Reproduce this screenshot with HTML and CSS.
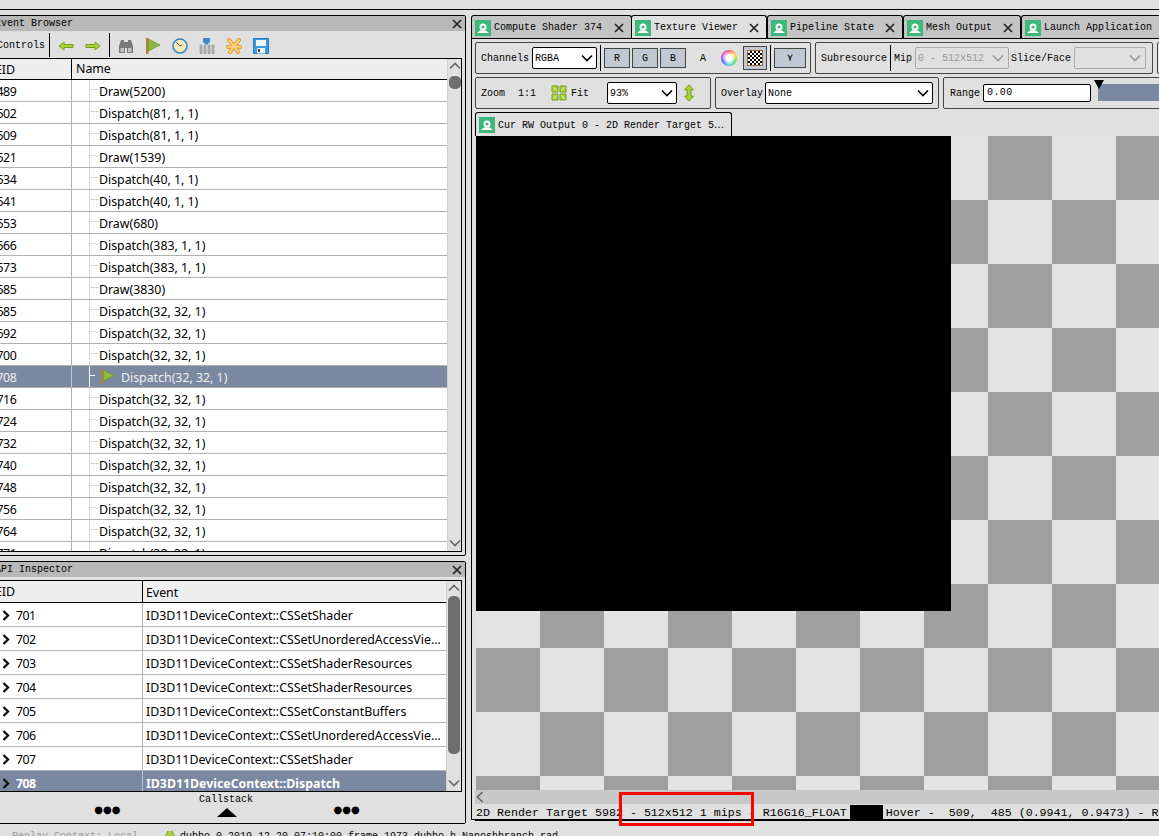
FILE: index.html
```html
<!DOCTYPE html>
<html lang="en">
<head>
<meta charset="utf-8">
<title>RenderDoc</title>
<link rel="stylesheet" href="styles.css">
</head>
<body>
<svg class="defs" width="0" height="0">
  <symbol id="tabicon" viewBox="0 0 16 16"><rect width="16" height="16" fill="#3cb878"/><path d="M4.5 7a3.5 3.5 0 1 1 7 0a3.5 3.5 0 1 1-7 0zM6.5 7a1.5 1.5 0 1 0 3 0a1.5 1.5 0 1 0-3 0z" fill="#fff"/><path d="M2 13l3-2.5h6l3 2.5z" fill="#fff"/></symbol>
  <symbol id="flag" viewBox="0 0 16 16"><rect x="1" y="0" width="2.500" height="16" fill="#b08040"/><path d="M3.500 1l11.500 6l-11.500 6z" fill="#8cb83c" stroke="#6c9428" stroke-width=".7"/></symbol>
  <symbol id="chev" viewBox="0 0 12 8"><path d="M1 1.5l5 5l5-5" fill="none" stroke="currentColor" stroke-width="1.6"/></symbol>
  <symbol id="close" viewBox="0 0 10 10"><path d="M1 1l8 8M9 1l-8 8" fill="none" stroke="#222" stroke-width="1.700"/></symbol>
  <symbol id="gt" viewBox="0 0 8 11"><path d="M1.500 1l4.500 4.500l-4.500 4.500" fill="none" stroke="#111" stroke-width="2.300"/></symbol>
</svg>
<div class="app">
  <div class="topbar"></div>
  <div class="main">
    <div class="leftcol">
      <section class="panel events">
        <div class="title"><span>Event Browser</span><svg class="x"><use href="#close"/></svg></div>
        <div class="tools">
          <span class="ctl">Controls</span>
          <i class="vsep"></i>
          <svg class="ic arrow" viewBox="0 0 16 10"><path d="M1 5l5-4v2.500h9v3h-9v2.500z" fill="#a8d038" stroke="#7c9c20"/></svg>
          <svg class="ic arrow gap" viewBox="0 0 16 10"><path d="M15 5l-5-4v2.500h-9v3h9v2.500z" fill="#a8d038" stroke="#7c9c20"/></svg>
          <i class="vsep wide"></i>
          <svg class="ic" viewBox="0 0 16 16"><path d="M1 8l2-6h3v2h4v-2h3l2 6v7h-6v-5h-2v5h-6z" fill="#77797b"/><rect x="2.500" y="10" width="3.500" height="4" fill="#c2c4c6"/><rect x="10" y="10" width="3.500" height="4" fill="#c2c4c6"/></svg>
          <svg class="ic"><use href="#flag"/></svg>
          <svg class="ic" viewBox="0 0 16 16"><circle cx="8" cy="8" r="7" fill="#f6e8b8" stroke="#2a88c8" stroke-width="1.500"/><path d="M4.500 4.500l3.500 3.500l2-1" fill="none" stroke="#555"/></svg>
          <svg class="ic" viewBox="0 0 16 16"><path d="M1 7h2v9h-2zM5 7h2v9h-2zM9 7h2v9h-2zM13 7h2v9h-2z" fill="#b0b4b8" stroke="#888" stroke-width=".5"/><path d="M4 0h7v4l-3.500 3l-3.500-3z" fill="#3a88d0"/></svg>
          <svg class="ic" viewBox="0 0 16 16"><path d="M8 8l-5-6M8 8l5-6M8 8l-6 1M8 8l6 1M8 8l-4 6M8 8l4 6" stroke="#e89830" stroke-width="4" stroke-linecap="round"/><path d="M8 8l-5-6M8 8l5-6M8 8l-6 1M8 8l6 1M8 8l-4 6M8 8l4 6" stroke="#fcd080" stroke-width="2" stroke-linecap="round"/></svg>
          <svg class="ic" viewBox="0 0 16 16"><path d="M.5.500h15v15h-15z" fill="#3a9ce0" stroke="#2a78b8"/><rect x="3" y="2" width="10" height="6" fill="#eef4fa"/><rect x="4" y="10" width="8" height="5.500" fill="#eef4fa"/><rect x="5" y="11" width="2" height="3" fill="#445"/></svg>
        </div>
        <div class="frame">
          <div class="list">
            <div class="head tree-cols"><span class="c1">EID</span><span class="c2">Name</span></div>
            <div class="row tree-cols"><span class="c1">1489</span><span class="c2"><i class="branch"></i>Draw(5200)</span></div>
            <div class="row tree-cols"><span class="c1">1502</span><span class="c2"><i class="branch"></i>Dispatch(81, 1, 1)</span></div>
            <div class="row tree-cols"><span class="c1">1509</span><span class="c2"><i class="branch"></i>Dispatch(81, 1, 1)</span></div>
            <div class="row tree-cols"><span class="c1">1521</span><span class="c2"><i class="branch"></i>Draw(1539)</span></div>
            <div class="row tree-cols"><span class="c1">1534</span><span class="c2"><i class="branch"></i>Dispatch(40, 1, 1)</span></div>
            <div class="row tree-cols"><span class="c1">1541</span><span class="c2"><i class="branch"></i>Dispatch(40, 1, 1)</span></div>
            <div class="row tree-cols"><span class="c1">1553</span><span class="c2"><i class="branch"></i>Draw(680)</span></div>
            <div class="row tree-cols"><span class="c1">1566</span><span class="c2"><i class="branch"></i>Dispatch(383, 1, 1)</span></div>
            <div class="row tree-cols"><span class="c1">1573</span><span class="c2"><i class="branch"></i>Dispatch(383, 1, 1)</span></div>
            <div class="row tree-cols"><span class="c1">1585</span><span class="c2"><i class="branch"></i>Draw(3830)</span></div>
            <div class="row tree-cols"><span class="c1">1685</span><span class="c2"><i class="branch"></i>Dispatch(32, 32, 1)</span></div>
            <div class="row tree-cols"><span class="c1">1692</span><span class="c2"><i class="branch"></i>Dispatch(32, 32, 1)</span></div>
            <div class="row tree-cols"><span class="c1">1700</span><span class="c2"><i class="branch"></i>Dispatch(32, 32, 1)</span></div>
            <div class="row tree-cols sel"><span class="c1">1708</span><span class="c2"><i class="branch"></i><svg class="rowflag"><use href="#flag"/></svg>Dispatch(32, 32, 1)</span></div>
            <div class="row tree-cols"><span class="c1">1716</span><span class="c2"><i class="branch"></i>Dispatch(32, 32, 1)</span></div>
            <div class="row tree-cols"><span class="c1">1724</span><span class="c2"><i class="branch"></i>Dispatch(32, 32, 1)</span></div>
            <div class="row tree-cols"><span class="c1">1732</span><span class="c2"><i class="branch"></i>Dispatch(32, 32, 1)</span></div>
            <div class="row tree-cols"><span class="c1">1740</span><span class="c2"><i class="branch"></i>Dispatch(32, 32, 1)</span></div>
            <div class="row tree-cols"><span class="c1">1748</span><span class="c2"><i class="branch"></i>Dispatch(32, 32, 1)</span></div>
            <div class="row tree-cols"><span class="c1">1756</span><span class="c2"><i class="branch"></i>Dispatch(32, 32, 1)</span></div>
            <div class="row tree-cols"><span class="c1">1764</span><span class="c2"><i class="branch"></i>Dispatch(32, 32, 1)</span></div>
            <div class="row tree-cols"><span class="c1">1771</span><span class="c2"><i class="branch"></i>Dispatch(32, 32, 1)</span></div>
          </div>
          <div class="vscroll">
            <svg class="sarrow"><use href="#chev" transform="scale(1 -1) translate(0 -8)"/></svg>
            <div class="thumb thumb-small"></div>
            <svg class="sarrow bottom"><use href="#chev"/></svg>
          </div>
        </div>
      </section>
      <section class="panel api">
        <div class="title"><span>API Inspector</span><svg class="x"><use href="#close"/></svg></div>
        <div class="frame apiframe">
          <div class="list">
            <div class="head api-cols"><span class="c1">EID</span><span class="c2">Event</span></div>
            <div class="row api-cols"><span class="c1"><svg class="gt"><use href="#gt"/></svg>701</span><span class="c2">ID3D11DeviceContext::CSSetShader</span></div>
            <div class="row api-cols"><span class="c1"><svg class="gt"><use href="#gt"/></svg>702</span><span class="c2">ID3D11DeviceContext::CSSetUnorderedAccessVie…</span></div>
            <div class="row api-cols"><span class="c1"><svg class="gt"><use href="#gt"/></svg>703</span><span class="c2">ID3D11DeviceContext::CSSetShaderResources</span></div>
            <div class="row api-cols"><span class="c1"><svg class="gt"><use href="#gt"/></svg>704</span><span class="c2">ID3D11DeviceContext::CSSetShaderResources</span></div>
            <div class="row api-cols"><span class="c1"><svg class="gt"><use href="#gt"/></svg>705</span><span class="c2">ID3D11DeviceContext::CSSetConstantBuffers</span></div>
            <div class="row api-cols"><span class="c1"><svg class="gt"><use href="#gt"/></svg>706</span><span class="c2">ID3D11DeviceContext::CSSetUnorderedAccessVie…</span></div>
            <div class="row api-cols"><span class="c1"><svg class="gt"><use href="#gt"/></svg>707</span><span class="c2">ID3D11DeviceContext::CSSetShader</span></div>
            <div class="row api-cols sel bold"><span class="c1"><svg class="gt"><use href="#gt"/></svg>708</span><span class="c2">ID3D11DeviceContext::Dispatch</span></div>
          </div>
          <div class="vscroll api-scroll">
            <svg class="sarrow"><use href="#chev" transform="scale(1 -1) translate(0 -8)"/></svg>
            <div class="thumb thumb-big"></div>
            <svg class="sarrow bottom"><use href="#chev"/></svg>
          </div>
        </div>
        <div class="splitter">
          <span class="dots">●●●</span>
          <div class="callstack"><span>Callstack</span><i class="tri"></i></div>
          <span class="dots">●●●</span>
        </div>
      </section>
    </div>
    <div class="rightcol">
      <div class="tabs">
        <div class="tab t1"><svg class="tabic"><use href="#tabicon"/></svg><span>Compute Shader 374</span><svg class="x"><use href="#close"/></svg></div>
        <div class="tab t2 active"><svg class="tabic"><use href="#tabicon"/></svg><span>Texture Viewer</span><svg class="x"><use href="#close"/></svg></div>
        <div class="tab t3"><svg class="tabic"><use href="#tabicon"/></svg><span>Pipeline State</span><svg class="x"><use href="#close"/></svg></div>
        <div class="tab t4"><svg class="tabic"><use href="#tabicon"/></svg><span>Mesh Output</span><svg class="x"><use href="#close"/></svg></div>
        <div class="tab t5"><svg class="tabic"><use href="#tabicon"/></svg><span>Launch Application</span></div>
      </div>
      <div class="pane">
        <div class="bar">
          <div class="group g1">
            <span class="lbl">Channels</span>
            <div class="sel-box s-rgba"><span>RGBA</span><svg class="dd"><use href="#chev"/></svg></div>
            <i class="vsep tall"></i>
            <span class="btn">R</span><span class="btn">G</span><span class="btn">B</span>
            <span class="a">A</span>
            <div class="wheel"></div>
            <div class="chk-btn"><i class="chk"></i></div>
            <i class="vsep tall"></i>
            <span class="btn wide">⋎</span>
          </div>
          <div class="group g2">
            <span class="lbl sub">Subresource</span>
            <i class="vsep tall"></i>
            <span class="lbl mip">Mip</span>
            <div class="sel-box off s-mip"><span>0 - 512x512</span><svg class="dd"><use href="#chev"/></svg></div>
            <span class="lbl">Slice/Face</span>
            <div class="sel-box off s-slice"><span></span><svg class="dd"><use href="#chev"/></svg></div>
          </div>
          <div class="group g3"></div>
        </div>
        <div class="bar second">
          <div class="group z1">
            <span class="lbl">Zoom</span>
            <span class="lbl one">1:1</span>
            <svg class="fit" viewBox="0 0 16 16"><path d="M1 1h6v6h-6zM9 1h6v6h-6zM1 9h6v6h-6zM9 9h6v6h-6z" fill="#a8d038" stroke="#7c9c20"/><path d="M2.500 2.500l3 3M13.500 2.500l-3 3M2.500 13.500l3-3M13.500 13.500l-3-3" stroke="#eef6d0"/></svg>
            <span class="lbl">Fit</span>
            <div class="sel-box s-zoom"><span>93%</span><svg class="dd"><use href="#chev"/></svg></div>
            <svg class="updown" viewBox="0 0 12 18"><path d="M6 .8l4.500 5h-2.500v6.400h2.500l-4.500 5l-4.500-5h2.500v-6.400h-2.500z" fill="#a8d038" stroke="#7c9c20"/></svg>
          </div>
          <div class="group z2">
            <span class="lbl">Overlay</span>
            <div class="sel-box s-over"><span>None</span><svg class="dd"><use href="#chev"/></svg></div>
          </div>
          <div class="group z3">
            <span class="lbl">Range</span>
            <div class="input">0.00</div>
            <div class="slider"><i class="marker"></i></div>
          </div>
        </div>
        <div class="inner-tabs">
          <div class="tab itab"><svg class="tabic"><use href="#tabicon"/></svg><span>Cur RW Output 0 - 2D Render Target 5<span class="more">…</span></span></div>
        </div>
        <div class="viewer"><div class="texture"></div></div>
        <div class="hscroll"><svg class="larrow"><use href="#chev" transform="rotate(90 6 6) translate(0 2)"/></svg></div>
        <div class="status"><span>2D Render Target 5982 - 512x512 1 mips - R16G16_FLOAT</span><i class="swatch"></i><span>Hover -  509,  485 (0.9941, 0.9473) - R</span></div>
      </div>
      <div class="annot"></div>
    </div>
  </div>
  <div class="foot"><span class="replay">Replay Context: Local</span><svg class="footic" viewBox="0 0 12 12"><path d="M1 11l5-10l5 10z" fill="#a8d038" stroke="#7c9c20"/></svg><span class="cap">dubbo 0.2019.12.20 07:10:00 frame 1973 dubbo.h Nanoshbranch.rad</span></div>
</div>
</body>
</html>
```
FILE: styles.css
```css
* { box-sizing: border-box; }
html, body { margin: 0; padding: 0; background: #e0e0e0; }
.defs { position: absolute; }
.app { width: 1159px; height: 836px; overflow: hidden; display: flex; flex-direction: column; font-family: "Liberation Mono", monospace; font-size: 10px; color: #000; }
.topbar { height: 10px; flex: none; border-bottom: 1px solid #000; }
.main { display: flex; flex: none; height: 815px; padding-top: 5px; margin-left: -12px; gap: 5px; }
.leftcol { width: 478px; flex: none; display: flex; flex-direction: column; gap: 5px; }
.panel { border: 1px solid #000; border-radius: 2px; display: flex; flex-direction: column; }
.events { height: 541px; }
.api { height: 263px; }
.title { height: 15px; flex: none; background: #b8b8b8; display: flex; justify-content: space-between; align-items: center; padding: 0 3px 0 6px; line-height: 15px; }
.x { width: 10px; height: 10px; flex: none; }
.tools { height: 27px; flex: none; display: flex; align-items: center; padding: 2px 0 0 8px; font-size: 10px; }
.ctl { width: 52px; }
.vsep { width: 1px; height: 24px; background: #000; flex: none; }
.ic { width: 16px; height: 16px; flex: none; margin-left: 11px; }
.tools .vsep { margin-top: -2px; }
.tools .arrow { margin-left: 8px; height: 10px; }
.tools .arrow.gap { margin-left: 11px; }
.tools .vsep.wide { margin-left: 8px; margin-right: -3px; }
.frame { flex: 1; min-height: 0; margin-right: 3px; border: 1px solid #000; display: flex; overflow: hidden; background: #fff; margin-bottom: 3px; }
.apiframe { flex: none; height: 212px; margin-top: 3px; margin-bottom: 0; }
.list { flex: 1; min-width: 0; overflow: hidden; font-family: "Noto Sans", sans-serif; font-size: 12.35px; }
.head { height: 21px; background: #eeeeee; border-bottom: 1px solid #000; line-height: 22px; }
.head .c1, .head .c2 { border-right: 1px solid #000; }
.head .c2 { border-right: 0; padding-left: 4px; }
.row { height: 22px; line-height: 23px; border-bottom: 1px solid #b0b0b0; background: #fff; white-space: nowrap; }
.tree-cols { display: grid; grid-template-columns: 82px 1fr; }
.api-cols { display: grid; grid-template-columns: 153px 1fr; }
.api-cols.row { height: 24px; line-height: 25px; }
.head.api-cols { height: 22px; line-height: 21px; }
.c1 { padding-left: 0; border-right: 1px solid #b0b0b0; overflow: hidden; }
.row .c1 { letter-spacing: -.5px; }
.head.tree-cols .c1 { padding-left: 5px; }
.c2 { overflow: hidden; display: flex; align-items: center; }
.row.tree-cols .c2 { padding-top: 1px; }
.api-cols .c1 { padding-left: 12px; }
.head.api-cols .c1 { padding-left: 5px; }
.api-cols .c2 { padding-left: 3px; padding-top: 1px; }
.branch { width: 27px; height: 22px; flex: none; margin-top: -2px; background: linear-gradient(#d8d8d8, #d8d8d8) 17px 0 / 1px 100% no-repeat, linear-gradient(#d8d8d8, #d8d8d8) 17px 10px / 10px 1px no-repeat; }
.sel { background: #7a88a2; color: #f0f0f0; }
.sel .c1 { border-right-color: #c0c6d0; }
.sel .branch { background: linear-gradient(#fff, #fff) 17px 0 / 1px 100% no-repeat, linear-gradient(#fff, #fff) 17px 10px / 6px 1px no-repeat; }
.rowflag { width: 15px; height: 17px; margin: -1px 6px 0 1px; flex: none; }
.bold { font-weight: 700; color: #fff; }
.gt { width: 8px; height: 11px; margin-right: 6px; vertical-align: -1px; }
.vscroll { width: 14px; flex: none; background: #e0e0e0; border-left: 1px solid #d0d0d0; display: flex; flex-direction: column; align-items: center; color: #666; }
.api-scroll { width: 15px; }
.sarrow { width: 12px; height: 8px; margin-top: 3px; flex: none; }
.sarrow.bottom { margin-top: auto; margin-bottom: 4px; }
.thumb { width: 12px; background: #6e6e6e; border-radius: 5px; }
.thumb-small { height: 13px; margin-top: 6px; }
.thumb-big { height: 158px; margin-top: 4px; }
.splitter { flex: 1; display: flex; justify-content: center; align-items: flex-start; background: #e0e0e0; }
.dots { font-family: "DejaVu Sans", sans-serif; font-size: 10px; line-height: 12px; margin-top: 12px; }
.callstack { width: 179px; display: flex; flex-direction: column; align-items: center; line-height: 12px; margin: 2px 17px 0; }
.callstack span { margin: 0 2px 0 0; }
.tri { width: 0; height: 0; border-left: 10px solid transparent; border-right: 10px solid transparent; border-bottom: 9px solid #000; margin-top: 2px; }
.rightcol { width: 700px; flex: none; position: relative; display: flex; flex-direction: column; }
.tabs { height: 24px; flex: none; display: flex; align-items: stretch; }
.tab { background: #c4c4c4; border: 1px solid #000; border-bottom: 0; border-radius: 3px 3px 0 0; display: flex; align-items: center; padding-left: 3px; gap: 3px; white-space: nowrap; flex: none; }
.tab.active { background: #e0e0e0; }
.tab .x { margin-left: auto; margin-right: 7px; }
.tabic { width: 16px; height: 16px; flex: none; }
.t1 { width: 161px; }
.t2 { width: 136px; margin-left: -1px; }
.t3 { width: 136px; }
.t4 { width: 118px; }
.t5 { width: 160px; }
.pane { height: 782px; border: 1px solid #000; padding: 3px 3px 0 3px; margin-top: -1px; display: flex; flex-direction: column; }
.bar { display: flex; gap: 4px; height: 32px; flex: none; }
.bar.second { margin-top: 3px; }
.group { border: 1px solid #444; border-radius: 2px; display: flex; align-items: center; padding-left: 5px; flex: none; }
.g1 { width: 336px; }
.g2 { width: 338px; }
.g3 { width: 20px; }
.z1 { width: 236px; }
.z2 { width: 224px; }
.z3 { width: 240px; padding-left: 6px; }
.lbl { flex: none; }
.sel-box { height: 22px; background: #fff; border: 1px solid #000; border-radius: 2px; display: flex; align-items: center; justify-content: space-between; padding: 0 3px 0 2px; flex: none; }
.sel-box .dd { width: 12px; height: 8px; flex: none; color: #000; }
.sel-box.off { background: #e0e0e0; border-color: #aaa; color: #999; }
.sel-box.off .dd { color: #999; }
.s-rgba { width: 65px; margin-left: 3px; }
.tall { height: 26px; margin: 0 3px; }
.btn { width: 26px; height: 20px; background: #c0c8d4; border: 1px solid #444; display: flex; align-items: center; justify-content: center; margin-right: 2px; flex: none; }
.btn.wide { width: 32px; margin: 0; }
.a { width: 30px; text-align: center; flex: none; }
.wheel { width: 16px; height: 16px; border-radius: 50%; background: radial-gradient(circle, #fff 0 25%, transparent 70%), conic-gradient(#f44, #fc4, #4d4, #4cc, #44f, #d4d, #f44); flex: none; margin-left: 3px; }
.chk-btn { width: 24px; height: 24px; background: #c0c8d4; border: 1px solid #444; margin-left: 6px; display: flex; align-items: center; justify-content: center; flex: none; }
.chk { width: 14px; height: 14px; outline: 1px solid #a06828; background: conic-gradient(#000 25%, #fff 0 50%, #000 0 75%, #fff 0) 0 0 / 4px 4px; }
.mip { width: 21px; }
.s-mip { width: 94px; margin-right: 2px; padding-right: 4px; }
.s-slice { width: 72px; margin-left: 3px; padding-right: 4px; }
.one { margin-left: 13px; }
.fit { width: 16px; height: 16px; margin: 0 4px 0 15px; flex: none; }
.s-zoom { width: 70px; margin-left: 18px; }
.updown { width: 12px; height: 18px; margin-left: 6px; flex: none; }
.s-over { width: 168px; margin-left: 2px; }
.input { width: 108px; height: 18px; margin-left: 3px; background: #fff; border: 1px solid #000; border-radius: 2px; padding-left: 3px; line-height: 16px; letter-spacing: .4px; flex: none; }
.slider { width: 100px; height: 17px; background: #7a88a2; margin-left: 7px; position: relative; flex: none; align-self: flex-start; margin-top: 6px; }
.marker { position: absolute; left: -4px; top: -4px; width: 0; height: 0; border-left: 5px solid transparent; border-right: 5px solid transparent; border-top: 9px solid #000; }
.inner-tabs { height: 24px; margin-top: 3px; flex: none; display: flex; }
.tab.itab { width: 257px; background: #e0e0e0; }
.more { font-family: "DejaVu Sans", sans-serif; font-size: 10px; }
.viewer { height: 654px; flex: none; margin-left: 1px; background: conic-gradient(#e3e3e3 25%, #9f9f9f 0 50%, #e3e3e3 0 75%, #9f9f9f 0) 0 0 / 128px 128px; }
.texture { width: 475px; height: 475px; background: #000; }
.hscroll { height: 14px; flex: none; background: #c8c8c8; color: #666; }
.larrow { width: 12px; height: 12px; margin: 1px 0 0 1px; display: block; }
.status { height: 17px; flex: none; white-space: pre; overflow: hidden; border-bottom: 1px solid #000; display: flex; align-items: flex-start; font-size: 11.67px; line-height: 16px; padding: 1px 0 0 1px; }
.swatch { width: 33px; height: 15px; background: #000; flex: none; margin: 0 3px 0 3px; }
.annot { position: absolute; left: 148px; top: 777px; width: 135px; height: 34px; border: 3px solid #f00; }
.foot { font-size: 10px; padding-left: 12px; height: 11px; line-height: 11px; margin-top: 6px; overflow: hidden; white-space: nowrap; display: flex; align-items: flex-start; }
.replay { color: #999; width: 152px; flex: none; }
.footic { width: 12px; height: 12px; margin: -5px 4px 0 0; flex: none; }
```
